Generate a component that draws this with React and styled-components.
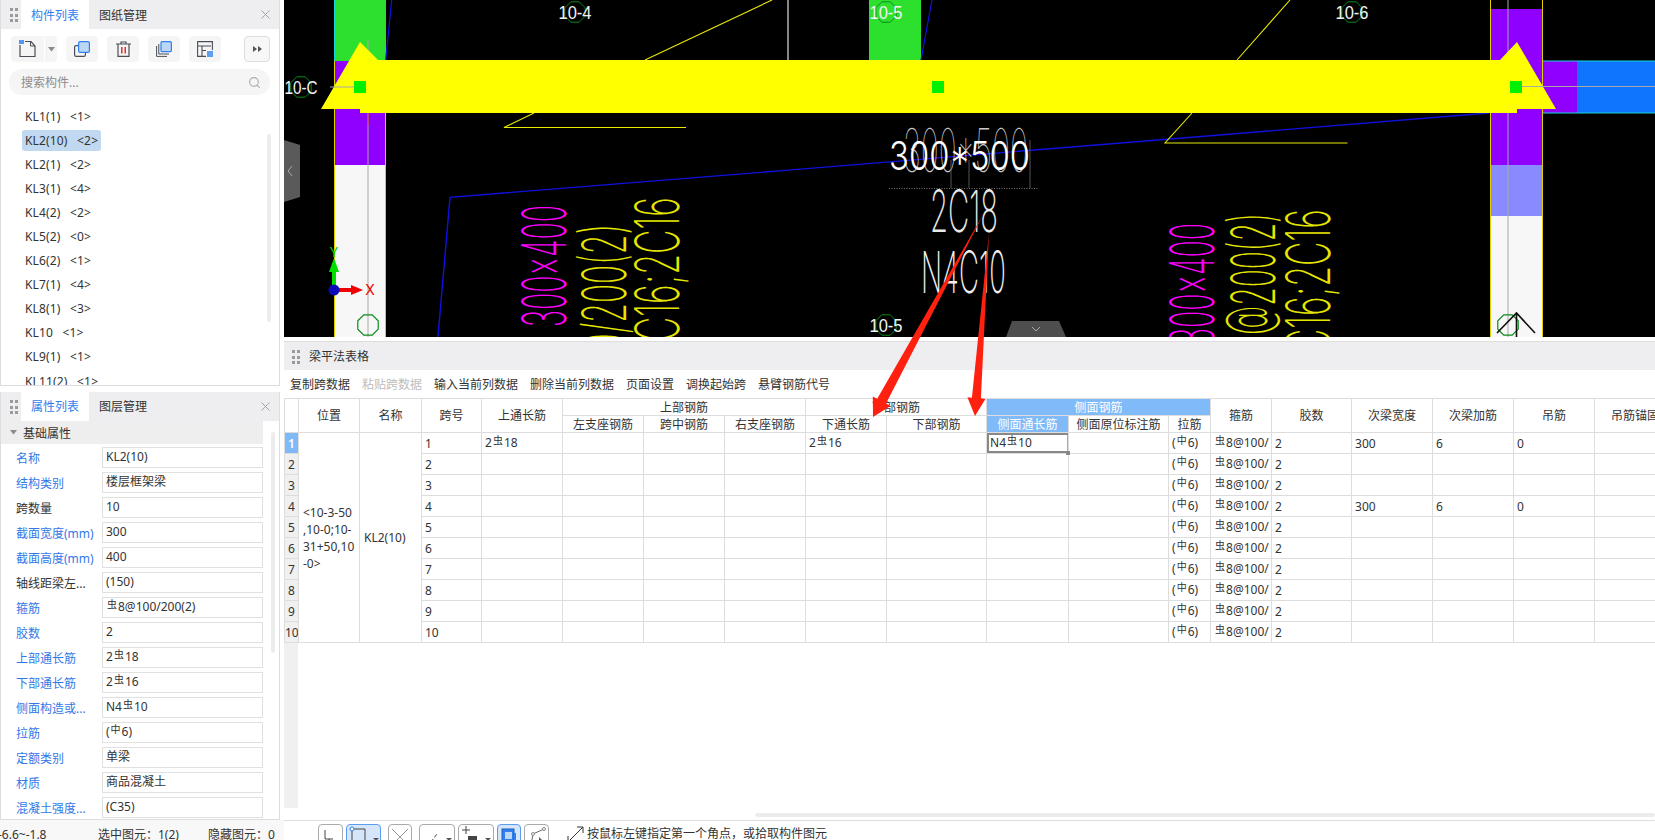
import React from 'react';
import styled, { createGlobalStyle } from 'styled-components';
import { Search, X } from 'lucide-react';

const Global = createGlobalStyle`
  html, body { margin: 0; padding: 0; background: #fff; overflow: hidden; }
  body { font-family: "Noto Sans", "Noto Sans CJK SC", sans-serif; font-size: 12px; color: #333; }
  * { box-sizing: border-box; }
`;

const Page = styled.div`
  position: relative; width: 1655px; height: 840px; overflow: hidden;
  display: flex; flex-direction: column;
`;
const Main = styled.div`display: flex; height: 820px;`;
const LeftColumn = styled.div`width: 284px; display: flex; flex-direction: column; gap: 6px; flex: none;`;
const Panel = styled.section`
  position: relative; width: 280px; height: ${p => p.$h}px; background: #fff;
  border: 1px solid #ddd; border-top: 0; display: flex; flex-direction: column; overflow: hidden;
`;
const PanelHead = styled.header`
  height: 29px; flex: none; background: #eeeef0; display: flex; align-items: stretch; padding-left: 8px;
`;
const GripSvg = styled.svg`width: 12px; height: 29px; flex: none; align-self: center;`;
const Grip = () => (
  <GripSvg viewBox="0 0 12 29">
    {[9, 15, 20].map(y => [1, 6].map(x => <rect key={x + '-' + y} x={x} y={y - 1} width="3" height="3" fill="#9a9a9a" />))}
  </GripSvg>
);
const Tab = styled.div`
  width: ${p => p.$w}px; display: flex; align-items: center; justify-content: center; padding-bottom: ${p => p.$pb || 0}px;
  background: ${p => (p.$active ? '#fff' : 'transparent')};
  color: ${p => (p.$active ? '#2f80ed' : '#333')};
`;
const CloseBtn = styled.div`margin-left: auto; margin-right: 6px; display: flex; align-items: center; color: #a0a0a0;`;
const Tools = styled.div`display: flex; align-items: center; padding: 7px 0 0 10px; height: 33px; flex: none;`;
const ToolBtn = styled.div`
  width: ${p => p.$w || 32}px; height: 26px; background: ${p => (p.$out ? '#f7f7f7' : '#f5f5f5')};
  border-radius: ${p => p.$r || '4px'}; margin-left: ${p => p.$ml || 0}px;
  border: ${p => (p.$out ? '1px solid #ddd' : '0')};
  display: flex; align-items: center; justify-content: center; flex: none;
`;
const SearchBox = styled.div`
  margin: 7px 0 0 8px; width: 261px; height: 26px; border-radius: 13px; background: #f5f5f5;
  display: flex; align-items: center; justify-content: space-between; padding: 0 9px 0 12px; color: #8c8c8c; flex: none;
`;
const ItemList = styled.ul`list-style: none; margin: 9px 0 0; padding: 0; flex: 1;`;
const Item = styled.li`height: 24.1px; display: flex; align-items: center; padding-left: 21px; white-space: pre;`;
const ItemLabel = styled.span`
  padding: 0 3px; height: 21px; line-height: 21px; border-radius: 3px; word-spacing: 1.5px; letter-spacing: .15px;
  background: ${p => (p.$sel ? '#c0d8f0' : 'transparent')};
`;
const ScrollThumb = styled.div`
  position: absolute; background: #ececec; border-radius: 2px; width: 4px;
  left: ${p => p.$x}px; top: ${p => p.$y}px; height: ${p => p.$h}px;
`;
const Section = styled.div`
  width: 262px; height: 23px; flex: none; background: #eeeeee; display: flex; align-items: center; gap: 6px; padding-left: 9px;
`;
const Props = styled.div`display: flex; flex-direction: column; gap: 4px; padding-top: 3px;`;
const PropRow = styled.div`display: flex; align-items: center; height: 21px; padding-left: 15px;`;
const PropLabel = styled.div`
  width: 86px; flex: none; white-space: nowrap; color: ${p => (p.$plain ? '#333' : '#3378e8')};
`;
const PropValue = styled.div`
  width: 161px; height: 21px; border: 1px solid #e0e0e0; line-height: 18px; padding-left: 3px; flex: none; white-space: nowrap;
`;
const Rb = styled.span`font-size: 10px; position: relative; top: -3px; margin: 0 1px;`;

const RightColumn = styled.div`flex: 1; min-width: 0; display: flex; flex-direction: column; position: relative;`;
const CanvasSvg = styled.svg`display: block; width: 1371px; height: 337px; background: #000; flex: none;`;
const GridPanel = styled.section`
  margin-top: 4px; border-top: 1px solid #ddd; flex: 1; display: flex; flex-direction: column; min-height: 0; overflow: hidden;
`;
const GridHead = styled.header`
  height: 28px; background: #eeeef0; flex: none; display: flex; align-items: center; padding-left: 7px; gap: 6px;
`;
const GridTools = styled.div`height: 28px; display: flex; align-items: center; gap: 12px; padding-left: 6px; flex: none;`;
const GridTool = styled.span`color: ${p => (p.$off ? '#bdbdbd' : '#333')}; white-space: nowrap;`;
const TableScroll = styled.div`flex: 1; display: flex; flex-direction: column; min-height: 0; overflow: hidden;`;
const Table = styled.table`
  border-collapse: collapse; table-layout: fixed; width: 1392px; flex: none;
`;
const Th = styled.th`
  font-weight: 400; height: 17px; padding: 0; border: 1px solid #ddd; overflow: hidden; white-space: nowrap;
  text-align: center; line-height: 15px;
  background: ${p => (p.$blue ? '#80baf8' : '#fff')}; color: ${p => (p.$blue ? '#fff' : '#333')};
`;
const Td = styled.td`
  height: 21px; padding: 0 3px; border: 1px solid #ddd; overflow: hidden; white-space: nowrap; line-height: 15px; position: relative;
`;
const MergedTd = styled(Td)`line-height: 17px; padding: 0 0 0 4px;`;
const SelectedTd = styled(Td)`
  overflow: visible; box-shadow: inset 2px 0 0 #888, inset 0 -2px 0 #888, inset 0 2px 0 #888, inset -1px 0 0 #aaa;
`;
const Handle = styled.i`
  position: absolute; right: -2px; bottom: -2px; width: 4px; height: 4px; background: #888; z-index: 1;
`;
const RowNo = styled.td`
  height: 21px; padding: 0; border: 1px solid #ddd; text-align: center; overflow: hidden; font-size: 12px;
  background: ${p => (p.$sel ? '#7fbaf8' : '#f0f0f0')}; color: ${p => (p.$sel ? '#fff' : '#333')}; font-weight: ${p => (p.$sel ? 600 : 400)};
`;
const Filler = styled.div`flex: 1; width: 14px; background: #f0f0f0;`;
const HScroll = styled.div`height: 12px; flex: none; padding: 5px 0 0 471px;`;
const HThumb = styled.div`height: 4px; background: #ececec; border-radius: 2px;`;

const StatusBar = styled.footer`height: 20px; display: flex; flex: none; overflow: hidden; background: #fff;`;
const StatusLeft = styled.div`
  width: 284px; flex: none; background: #f8f8f8; display: flex; padding-top: 7px; line-height: 16px; white-space: nowrap;
`;
const Readout = styled.span`width: ${p => p.$w}px; flex: none; margin-left: ${p => p.$ml || 0}px;`;
const StatusRight = styled.div`
  flex: 1; border-top: 1px solid #ddd; display: flex; align-items: flex-start; padding: 3px 0 0 34px; gap: 3px;
`;
const StatusBtn = styled.div`
  width: ${p => p.$w}px; height: 27px; border-radius: 4px; flex: none; position: relative; margin-left: ${p => p.$ml || 0}px;
  border: 1px solid ${p => (p.$on ? '#5b9cf0' : '#aaa')}; background: ${p => (p.$on ? '#d6e6fa' : '#fff')};
`;
const StatusSvg = styled.svg`display: block;`;
const Hint = styled.div`display: flex; gap: 3px; margin-left: 15px; white-space: nowrap; font-size: 12px; line-height: 16px; padding-top: 2px;`;

const Overlay = styled.svg`position: absolute; left: 0; top: 0; width: 1655px; height: 840px; pointer-events: none;`;

const Mark = () => <Rb>虫</Rb>;
const Caret = () => <svg width="7" height="5" viewBox="0 0 7 5"><path d="M0 0h7L3.5 4.5z" fill="#8a8a8a" /></svg>;

const items = ['KL1(1)  <1>', 'KL2(10)  <2>', 'KL2(1)  <2>', 'KL3(1)  <4>', 'KL4(2)  <2>', 'KL5(2)  <0>', 'KL6(2)  <1>', 'KL7(1)  <4>', 'KL8(1)  <3>', 'KL10  <1>', 'KL9(1)  <1>', 'KL11(2)  <1>'];

const props = [
  ['名称', 'KL2(10)'], ['结构类别', '楼层框架梁'], ['跨数量', '10', 1], ['截面宽度(mm)', '300'], ['截面高度(mm)', '400'],
  ['轴线距梁左...', '(150)', 1], ['箍筋', <><Mark />8@100/200(2)</>], ['胶数', '2'], ['上部通长筋', <>2<Mark />18</>],
  ['下部通长筋', <>2<Mark />16</>], ['侧面构造或...', <>N4<Mark />10</>], ['拉筋', <>(<Rb>中</Rb>6)</>], ['定额类别', '单梁'],
  ['材质', '商品混凝土'], ['混凝土强度...', '(C35)'],
];

const widths = [14, 61, 62, 60, 81, 81, 81, 81, 81, 100, 82, 100, 42, 61, 80, 81, 81, 81, 81];

const gridLabels = [['10-4', 575, 12], ['10-C', 301, 87], ['10-5', 886, 12], ['10-6', 1352, 12], ['10-5', 886, 325]];
const octagon = (cx, cy, r) => {
  const pts = [];
  for (let i = 0; i < 8; i++) {
    const a = Math.PI / 8 + (i * Math.PI) / 4;
    pts.push(`${(cx + r * Math.cos(a)).toFixed(1)},${(cy + r * Math.sin(a)).toFixed(1)}`);
  }
  return pts.join(' ');
};

const CadFont = 'Inter, "Liberation Sans", sans-serif';
const VText = ({ x, y, len, fs = 61, color, children }) => (
  <text
    transform={`translate(${x} ${y}) rotate(-90)`}
    fontFamily={CadFont} fontWeight="150" fontSize={fs} fill={color}
    textLength={len} lengthAdjust="spacingAndGlyphs"
  >{children}</text>
);
const HText = ({ x, y, len, fs, color, weight = 150, children }) => (
  <text x={x} y={y} fontFamily={CadFont} fontWeight={weight} fontSize={fs} fill={color} textLength={len} lengthAdjust="spacingAndGlyphs">{children}</text>
);

const Canvas = () => (
  <CanvasSvg viewBox="284 0 1371 337">
    <rect x="334" y="0" width="52" height="61" fill="#2ee02e" />
    <path d="M334.5 0V61" stroke="#19d6d6" />
    <rect x="334" y="61" width="52" height="104" fill="#8f00ff" />
    <rect x="334" y="165" width="52" height="172" fill="#f7f7f7" />
    <path d="M334.5 61V337M385.5 61V337" stroke="#e0d000" />
    <rect x="869" y="0" width="52" height="61" fill="#2ee02e" />
    <rect x="1490" y="9" width="53" height="156" fill="#8f00ff" />
    <rect x="1490" y="165" width="53" height="51" fill="#8a8aff" />
    <rect x="1490" y="216" width="53" height="121" fill="#f7f7f7" />
    <path d="M1490.5 0V337M1542.5 0V337" stroke="#e0d000" />
    <rect x="1543" y="61" width="34" height="52" fill="#8f00ff" />
    <rect x="1577" y="61" width="78" height="52" fill="#0f75ff" />
    <path d="M1543 61H1655M1543 113H1655" stroke="#19d6d6" />

    <path d="M385.7 60L391.7 0M921 60L932 0" stroke="#1010e0" strokeWidth="1.2" />
    <path d="M788 0V60" stroke="#e0e0e0" strokeWidth="1.2" />
    <path d="M437.7 340L450 197.3L785 170.4L1489 113" stroke="#1010e0" strokeWidth="1.4" fill="none" />
    <path d="M645 60L772 0M534 113L504 127.5H686M1237 60L1290 0M1192 113L1165 143H1347.5" stroke="#e8e800" strokeWidth="1.1" fill="none" />

    <path d="M368 40V337M1508 0V337" stroke="#a8a8a8" />
    <path d="M368 113V125" stroke="#e03030" />
    <polygon points="360,42 321,109 360,109 360,113 1517,113 1517,109 1556,109 1517,42 1500,60 378,60" fill="#ffff00" />
    <path d="M330 87H354M1522 86.5H1655" stroke="#a8a8a8" />
    <rect x="354" y="81" width="12" height="12" fill="#00f000" />
    <rect x="932" y="81" width="12" height="12" fill="#00f000" />
    <rect x="1510" y="81" width="12" height="12" fill="#00f000" />

    {gridLabels.map(([t, x, y], i) => <polygon key={i} points={octagon(x, y, 11)} fill="none" stroke="#0a8a1a" />)}
    {gridLabels.map(([t, x, y], i) => (
      <text key={i} x={x} y={y + 6.5} textAnchor="middle" fontFamily="'Liberation Sans', sans-serif" fontSize="18" fill="#f4f4f4" textLength="33" lengthAdjust="spacingAndGlyphs">{t}</text>
    ))}
    <polygon points={octagon(368, 325, 11)} fill="none" stroke="#0a8a1a" strokeWidth="1.2" />
    <polygon points={octagon(1508, 325, 11)} fill="none" stroke="#0a8a1a" strokeWidth="1.2" />
    <path d="M1497 333L1516.5 313L1535 333M1516.5 313V337" stroke="#111" strokeWidth="1.6" fill="none" />

    <path d="M334 290V270" stroke="#00e000" strokeWidth="4" />
    <polygon points="334,258 329,272 339,272" fill="#00e000" />
    <path d="M334 290H353" stroke="#f00000" strokeWidth="4" />
    <polygon points="363,290 351,285 351,295" fill="#f00000" />
    <circle cx="334" cy="290" r="5.5" fill="#0a0ab8" />
    <text x="370" y="295" textAnchor="middle" fontFamily={CadFont} fontSize="14" fill="#f00000">X</text>
    <text x="334" y="257" textAnchor="middle" fontFamily={CadFont} fontSize="13" fill="#00d000">Y</text>

    <VText x={566} y={327} len={122} color="#ff00ff">300x400</VText>
    <VText x={626} y={434} len={210} color="#e6e600">8@100/200(2)</VText>
    <VText x={679} y={362} len={165} color="#e6e600">2C16;2C16</VText>
    <VText x={1214} y={345} len={122} color="#ff00ff">300x400</VText>
    <VText x={1275} y={353} len={140} color="#e6e600">8@200(2)</VText>
    <VText x={1330} y={374} len={165} color="#e6e600">2C16;2C16</VText>

    <HText x={903} y={172} len={125} fs={60} color="#c8c8c8" weight={100}>300*500</HText>
    <HText x={889} y={170} len={141} fs={39} color="#ffffff" weight={300}>300*500</HText>
    <path d="M889 188.5H1039" stroke="#777" strokeDasharray="1 1.5" />
    <path d="M951 160V188M969 160V188M1030 140V188" stroke="#555" />
    <HText x={930} y={232} len={68} fs={58} color="#e8e8e8">2C18</HText>
    <HText x={921} y={293} len={85} fs={58} color="#f0f0f0">N4C10</HText>

    <path d="M284 140L300 145V197L284 202Z" fill="#5a5a5a" />
    <path d="M292 166L288 171L292 176" stroke="#aaa" fill="none" />
    <path d="M1012 321H1059L1066 337H1006Z" fill="#4e4e4e" />
    <path d="M1032 327L1036 331L1040 327" stroke="#aaa" fill="none" />
  </CanvasSvg>
);

const I = { dark: '#4a4f57', blue: '#2f80ed', fill: '#bcd6f5' };

const NewIcon = () => (
  <svg width="17" height="18" viewBox="0 0 17 18">
    <path d="M1 5V16.5H16V6L12 1.5H6" fill="none" stroke={I.dark} strokeWidth="1.2" />
    <path d="M11.5 1.5V6H16" fill="none" stroke={I.dark} />
    <rect x="0" y="0" width="5" height="4" fill={I.blue} opacity=".8" />
  </svg>
);
const CopyIcon = () => (
  <svg width="16" height="16" viewBox="0 0 16 16">
    <rect x=".6" y="4.6" width="10.8" height="10.8" rx="1.5" fill="none" stroke={I.dark} strokeWidth="1.2" />
    <rect x="4.6" y=".6" width="10.8" height="10.8" rx="1.5" fill={I.fill} stroke={I.blue} strokeWidth="1.2" />
  </svg>
);
const TrashIcon = () => (
  <svg width="15" height="16" viewBox="0 0 15 16">
    <path d="M0 3H15M5 3V1H10V3M2 3V15.4H13V3" fill="none" stroke={I.dark} strokeWidth="1.2" />
    <path d="M5.8 6V12.5M9.2 6V12.5" stroke="#e02020" strokeWidth="1.4" />
  </svg>
);
const FloorCopyIcon = () => (
  <svg width="16" height="16" viewBox="0 0 16 16">
    <path d="M.6 5V15.4H11M2.8 3V13H13" fill="none" stroke={I.dark} />
    <rect x="5" y=".6" width="10.4" height="10" rx="1.2" fill={I.fill} stroke={I.blue} strokeWidth="1.2" />
  </svg>
);
const PlanIcon = () => (
  <svg width="16" height="16" viewBox="0 0 16 16">
    <path d="M9 15.4H.6V.6H15.4V9M.6 5H14M5 5V15M5 9.5H9" fill="none" stroke={I.dark} strokeWidth="1.1" />
    <rect x="10" y="10" width="6" height="6" fill={I.blue} opacity=".75" />
  </svg>
);

const Ribbon = () => (
  <Tools>
    <ToolBtn $w={33} $r="4px 0 0 4px"><NewIcon /></ToolBtn>
    <ToolBtn $w={12} $ml={1} $r="0 4px 4px 0"><Caret /></ToolBtn>
    <ToolBtn $ml={9}><CopyIcon /></ToolBtn>
    <ToolBtn $ml={9}><TrashIcon /></ToolBtn>
    <ToolBtn $ml={9}><FloorCopyIcon /></ToolBtn>
    <ToolBtn $ml={9}><PlanIcon /></ToolBtn>
    <ToolBtn $w={26} $ml={23} $out>
      <svg width="9" height="6" viewBox="0 0 9 6"><path d="M0 0L4 3L0 6ZM5 0L9 3L5 6Z" fill="#555" /></svg>
    </ToolBtn>
  </Tools>
);

const cells = (r) => {
  const first = r === 1;
  const fourth = r === 4;
  return (
    <>
      <Td>{r}</Td>
      <Td>{first && <>2<Mark />18</>}</Td>
      <Td /><Td /><Td />
      <Td>{first && <>2<Mark />16</>}</Td>
      <Td />
      {first ? <SelectedTd>N4<Mark />10<Handle /></SelectedTd> : <Td />}
      <Td />
      <Td>(<Rb>中</Rb>6)</Td>
      <Td><Mark />8@100/</Td>
      <Td>2</Td>
      <Td>{(first || fourth) && '300'}</Td>
      <Td>{(first || fourth) && '6'}</Td>
      <Td>{(first || fourth) && '0'}</Td>
      <Td />
    </>
  );
};

const BeamTable = () => (
  <Table>
    <colgroup>{widths.map((w, i) => <col key={i} style={{ width: w }} />)}</colgroup>
    <thead>
      <tr>
        <Th rowSpan={2} />
        <Th rowSpan={2}>位置</Th>
        <Th rowSpan={2}>名称</Th>
        <Th rowSpan={2}>跨号</Th>
        <Th rowSpan={2}>上通长筋</Th>
        <Th colSpan={3}>上部钢筋</Th>
        <Th colSpan={2}>下部钢筋</Th>
        <Th colSpan={3} $blue>侧面钢筋</Th>
        <Th rowSpan={2}>箍筋</Th>
        <Th rowSpan={2}>胶数</Th>
        <Th rowSpan={2}>次梁宽度</Th>
        <Th rowSpan={2}>次梁加筋</Th>
        <Th rowSpan={2}>吊筋</Th>
        <Th rowSpan={2}>吊筋锚固</Th>
      </tr>
      <tr>
        <Th>左支座钢筋</Th><Th>跨中钢筋</Th><Th>右支座钢筋</Th>
        <Th>下通长筋</Th><Th>下部钢筋</Th>
        <Th $blue>侧面通长筋</Th><Th>侧面原位标注筋</Th><Th>拉筋</Th>
      </tr>
    </thead>
    <tbody>
      {Array.from({ length: 10 }, (_, i) => i + 1).map(r => (
        <tr key={r}>
          <RowNo $sel={r === 1}>{r}</RowNo>
          {r === 1 && (
            <>
              <MergedTd rowSpan={10}>&lt;10-3-50<br />,10-0;10-<br />31+50,10<br />-0&gt;</MergedTd>
              <MergedTd rowSpan={10}>KL2(10)</MergedTd>
            </>
          )}
          {cells(r)}
        </tr>
      ))}
    </tbody>
  </Table>
);

const Svg = ({ w, h, children }) => <StatusSvg width={w} height={h} viewBox={`0 0 ${w} ${h}`}>{children}</StatusSvg>;

const StatusTools = () => (
  <>
    <StatusBtn $w={25}><Svg w={23} h={25}><path d="M6 5V14H10V22M10 14H14" stroke="#444" fill="none" /></Svg></StatusBtn>
    <StatusBtn $w={35} $on><Svg w={33} h={25}>
      <path d="M5 4H18V22H5Z" stroke="#444" fill="none" /><circle cx="5" cy="4" r="2" fill="#fff" stroke="#2f80ed" />
      <path d="M26 13h6l-3 3z" fill="#555" />
    </Svg></StatusBtn>
    <StatusBtn $w={24} $ml={4}><Svg w={22} h={25}><path d="M3 4L19 20M19 4L3 20" stroke="#999" fill="none" /></Svg></StatusBtn>
    <StatusBtn $w={36} $ml={4}><Svg w={34} h={25}>
      <path d="M7 22L17 9" stroke="#444" strokeDasharray="4 2" fill="none" /><path d="M26 13h6l-3 3z" fill="#555" />
    </Svg></StatusBtn>
    <StatusBtn $w={36}><Svg w={34} h={25}>
      <path d="M3 5H11M7 1V9" stroke="#444" fill="none" /><rect x="9" y="11" width="9" height="4" fill="#444" /><path d="M26 13h6l-3 3z" fill="#555" />
    </Svg></StatusBtn>
    <StatusBtn $w={24} $on><Svg w={22} h={25}>
      <rect x="4" y="4" width="12" height="12" fill="#2f80ed" stroke="#1d5fc0" /><rect x="7" y="7" width="7" height="7" fill="#bcd6f5" /><path d="M17 8V20" stroke="#2f80ed" strokeWidth="2" />
    </Svg></StatusBtn>
    <StatusBtn $w={25}><Svg w={23} h={25}>
      <path d="M6 20L8 9L19 4" stroke="#666" fill="none" /><circle cx="8" cy="9" r="1.5" fill="#fff" stroke="#888" /><circle cx="19" cy="4" r="1.5" fill="#fff" stroke="#888" />
      <path d="M14 12L20 18H14Z" fill="#555" />
    </Svg></StatusBtn>
    <Hint>
      <svg width="17" height="16" viewBox="0 0 17 16"><path d="M1 16L16 1M10 1H16V7M1 10V16H7" stroke="#333" fill="none" /></svg>
      <span>按鼠标左键指定第一个角点，或拾取构件图元</span>
    </Hint>
  </>
);

export default function App() {
  return (
    <Page>
      <Global />
      <Main>
        <LeftColumn>
          <Panel $h={386}>
            <PanelHead>
              <Grip />
              <Tab $active $w={68}>构件列表</Tab>
              <Tab $w={68}>图纸管理</Tab>
              <CloseBtn><X size={15} strokeWidth={1.5} /></CloseBtn>
            </PanelHead>
            <Ribbon />
            <SearchBox>搜索构件...<Search size={13} color="#aaa" /></SearchBox>
            <ItemList>
              {items.map((t, i) => <Item key={i}><ItemLabel $sel={i === 1}>{t}</ItemLabel></Item>)}
            </ItemList>
            <ScrollThumb $x={266} $y={134} $h={188} />
          </Panel>
          <Panel $h={428}>
            <PanelHead>
              <Grip />
              <Tab $active $w={68} $pb={1}>属性列表</Tab>
              <Tab $w={68} $pb={1}>图层管理</Tab>
              <CloseBtn><X size={15} strokeWidth={1.5} /></CloseBtn>
            </PanelHead>
            <Section><Caret />基础属性</Section>
            <Props>
              {props.map(([l, v, plain], i) => (
                <PropRow key={i}>
                  <PropLabel $plain={plain}>{l}</PropLabel>
                  <PropValue>{v}</PropValue>
                </PropRow>
              ))}
            </Props>
            <ScrollThumb $x={270} $y={40} $h={221} />
          </Panel>
        </LeftColumn>
        <RightColumn>
          <Canvas />
          <GridPanel>
            <GridHead><Grip />梁平法表格</GridHead>
            <GridTools>
              <GridTool>复制跨数据</GridTool>
              <GridTool $off>粘贴跨数据</GridTool>
              <GridTool>输入当前列数据</GridTool>
              <GridTool>删除当前列数据</GridTool>
              <GridTool>页面设置</GridTool>
              <GridTool>调换起始跨</GridTool>
              <GridTool>悬臂钢筋代号</GridTool>
            </GridTools>
            <TableScroll>
              <BeamTable />
              <Filler />
              <HScroll><HThumb /></HScroll>
            </TableScroll>
          </GridPanel>
        </RightColumn>
      </Main>
      <StatusBar>
        <StatusLeft>
          <Readout $w={100} $ml={-2}>-6.6~-1.8</Readout>
          <Readout $w={110}>选中图元：1(2)</Readout>
          <Readout $w={70}>隐藏图元：0</Readout>
        </StatusLeft>
        <StatusRight><StatusTools /></StatusRight>
      </StatusBar>
      <Overlay viewBox="0 0 1655 840">
        <polygon points="984,213 886,403.6 890.4,406 873,417 872.8,396.4 877.2,398.8" fill="#ff2010" />
        <polygon points="989,233 980.9,398.3 985.4,399 975,416 967.4,397.3 971.9,397.7" fill="#ff2010" />
      </Overlay>
    </Page>
  );
}
